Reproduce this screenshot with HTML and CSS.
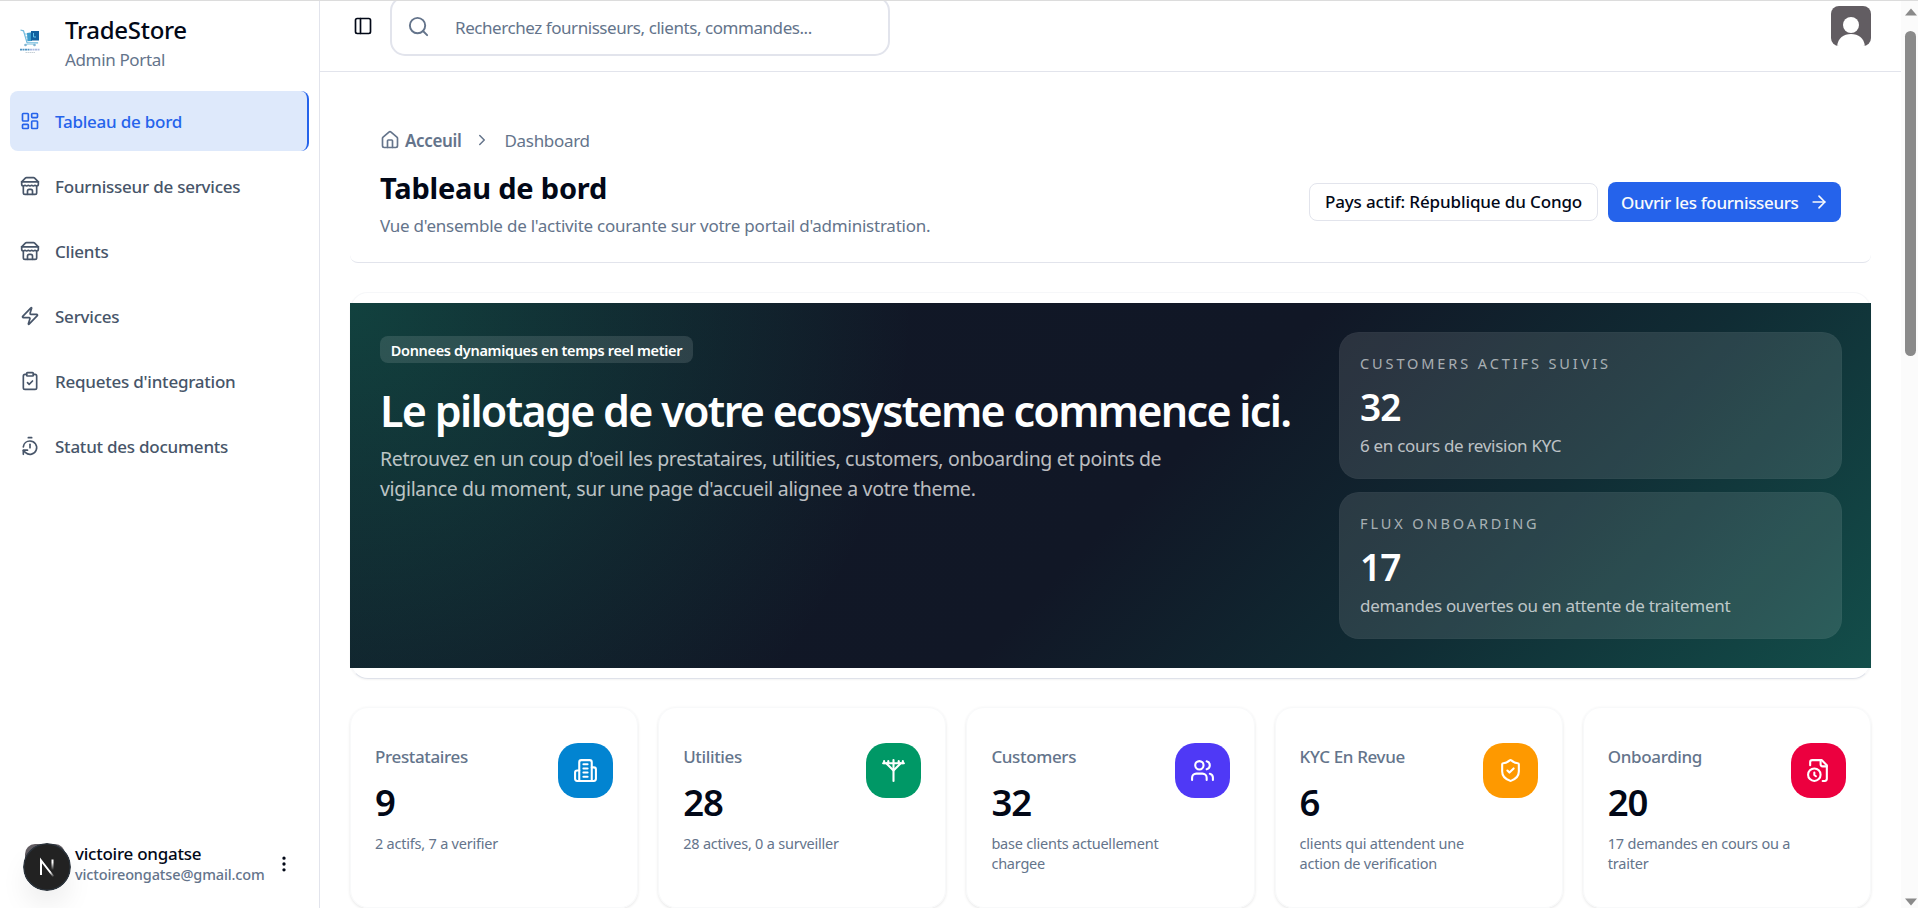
FILE: index.html
```
<!DOCTYPE html>
<html lang="fr">
<head>
    <meta charset="UTF-8">
    <meta name="viewport" content="width=device-width, initial-scale=1.0">
    <title>TradeStore - Tableau de bord</title>
    <link rel="stylesheet" href="styles.css">
</head>
<body>
    <div class="app">
        <!-- Sidebar -->
        <aside class="sidebar">
            <div class="brand">
                <svg class="brand-logo" viewBox="0 0 40 40">
                    <path d="M0.5 9l3 .8 3.600 12h11" fill="none" stroke="#6fb9dc" stroke-width="1.2"/>
                    <path d="M4.500 13h4M5.300 16h4M6 19h4" stroke="#7fc4e2" stroke-width="1"/>
                    <path d="M7 12l5-.8v8.800l-4.500.2z" fill="#3c9bcb"/>
                    <path d="M11 10h8v9.500h-8z" fill="#12609f"/>
                    <path d="M13.500 12v4h2.500" fill="none" stroke="#62c4ea" stroke-width="1"/>
                    <path d="M6 23.500h9" stroke="#b8dcec" stroke-width="1"/>
                    <circle cx="5.500" cy="24" r="1.300" fill="#7fb4d2"/>
                    <circle cx="14.500" cy="24" r="1.300" fill="#7fb4d2"/>
                    <path d="M0 28.700h10" stroke="#4f93c2" stroke-width="1.800" stroke-dasharray="2 .5"/>
                    <path d="M10 28.700h10" stroke="#a9b9e0" stroke-width="1.800" stroke-dasharray="2 .5"/>
                    <path d="M5.500 31.500h10" stroke="#b9c4cc" stroke-width=".8" stroke-dasharray="1.500 .5"/>
                </svg>
                <div>
                    <div class="brand-name">TradeStore</div>
                    <div class="brand-sub">Admin Portal</div>
                </div>
            </div>

            <nav class="menu">
                <a href="#" class="menu-item active">
                    <svg class="icon" viewBox="0 0 24 24"><rect width="7" height="9" x="3" y="3" rx="1"/><rect width="7" height="5" x="14" y="3" rx="1"/><rect width="7" height="9" x="14" y="12" rx="1"/><rect width="7" height="5" x="3" y="16" rx="1"/></svg>
                    <span>Tableau de bord</span>
                </a>
                <a href="#" class="menu-item">
                    <svg class="icon" viewBox="0 0 24 24"><path d="m2 7 4.410-4.410A2 2 0 0 1 7.830 2h8.340a2 2 0 0 1 1.420.590L22 7"/><path d="M4 12v8a2 2 0 0 0 2 2h12a2 2 0 0 0 2-2v-8"/><path d="M15 22v-4a2 2 0 0 0-2-2h-2a2 2 0 0 0-2 2v4"/><path d="M2 7h20"/><path d="M22 7v3a2 2 0 0 1-2 2a2.700 2.700 0 0 1-1.590-.630.700.700 0 0 0-.820 0A2.700 2.700 0 0 1 16 12a2.700 2.700 0 0 1-1.590-.630.700.700 0 0 0-.820 0A2.700 2.700 0 0 1 12 12a2.700 2.700 0 0 1-1.590-.630.700.700 0 0 0-.820 0A2.700 2.700 0 0 1 8 12a2.700 2.700 0 0 1-1.590-.630.700.700 0 0 0-.820 0A2.700 2.700 0 0 1 4 12a2 2 0 0 1-2-2V7"/></svg>
                    <span>Fournisseur de services</span>
                </a>
                <a href="#" class="menu-item">
                    <svg class="icon" viewBox="0 0 24 24"><path d="m2 7 4.410-4.410A2 2 0 0 1 7.830 2h8.340a2 2 0 0 1 1.420.590L22 7"/><path d="M4 12v8a2 2 0 0 0 2 2h12a2 2 0 0 0 2-2v-8"/><path d="M15 22v-4a2 2 0 0 0-2-2h-2a2 2 0 0 0-2 2v4"/><path d="M2 7h20"/><path d="M22 7v3a2 2 0 0 1-2 2a2.700 2.700 0 0 1-1.590-.630.700.700 0 0 0-.820 0A2.700 2.700 0 0 1 16 12a2.700 2.700 0 0 1-1.590-.630.700.700 0 0 0-.820 0A2.700 2.700 0 0 1 12 12a2.700 2.700 0 0 1-1.590-.630.700.700 0 0 0-.820 0A2.700 2.700 0 0 1 8 12a2.700 2.700 0 0 1-1.590-.630.700.700 0 0 0-.820 0A2.700 2.700 0 0 1 4 12a2 2 0 0 1-2-2V7"/></svg>
                    <span>Clients</span>
                </a>
                <a href="#" class="menu-item">
                    <svg class="icon" viewBox="0 0 24 24"><path d="M4 14a1 1 0 0 1-.780-1.630l9.900-10.200a.5.5 0 0 1 .860.460l-1.920 6.020A1 1 0 0 0 13 10h7a1 1 0 0 1 .780 1.630l-9.900 10.200a.5.5 0 0 1-.860-.460l1.920-6.020A1 1 0 0 0 11 14z"/></svg>
                    <span>Services</span>
                </a>
                <a href="#" class="menu-item">
                    <svg class="icon" viewBox="0 0 24 24"><rect width="8" height="4" x="8" y="2" rx="1"/><path d="M16 4h2a2 2 0 0 1 2 2v14a2 2 0 0 1-2 2H6a2 2 0 0 1-2-2V6a2 2 0 0 1 2-2h2"/><path d="m9 14 2 2 4-4"/></svg>
                    <span>Requetes d'integration</span>
                </a>
                <a href="#" class="menu-item">
                    <svg class="icon" viewBox="0 0 24 24"><path d="M10 2h4"/><path d="M12 14v-4"/><path d="M4 13a8 8 0 0 1 8-7 8 8 0 1 1-5.300 14L4 17.600"/><path d="M9 17H4v5"/></svg>
                    <span>Statut des documents</span>
                </a>
            </nav>

            <div class="user">
                <div class="user-avatar">
                    <svg class="dev-badge" viewBox="0 0 48 48">
                        <defs>
                            <linearGradient id="n-fade" x1="0" y1="0" x2="0" y2="1"><stop offset=".3" stop-color="#fff"/><stop offset="1" stop-color="#fff" stop-opacity="0"/></linearGradient>
                            <linearGradient id="n-diag" gradientUnits="userSpaceOnUse" x1="18" y1="17" x2="31" y2="34"><stop offset=".7" stop-color="#fff"/><stop offset="1" stop-color="#fff" stop-opacity="0"/></linearGradient>
                        </defs>
                        <circle cx="24" cy="24" r="23.200" fill="#222" stroke="#2b333b" stroke-width="1.500"/>
                        <path d="M18 32V17.500L30.500 33.500" fill="none" stroke="url(#n-diag)" stroke-width="2"/>
                        <rect x="28.500" y="16.500" width="2" height="10.500" fill="url(#n-fade)"/>
                    </svg>
                </div>
                <div class="user-info">
                    <div class="user-name">victoire ongatse</div>
                    <div class="user-mail">victoireongatse@gmail.com</div>
                </div>
                <svg class="icon dots" viewBox="0 0 24 24"><circle cx="12" cy="12" r="1"/><circle cx="12" cy="5" r="1"/><circle cx="12" cy="19" r="1"/></svg>
            </div>
        </aside>

        <!-- Main content -->
        <main class="main">
            <header class="topbar">
                <svg class="icon toggle" viewBox="0 0 24 24"><rect width="18" height="18" x="3" y="3" rx="2"/><path d="M9 3v18"/></svg>
                <div class="search">
                    <svg class="icon" viewBox="0 0 24 24"><circle cx="11" cy="11" r="8"/><path d="m21 21-4.300-4.300"/></svg>
                    <span>Recherchez fournisseurs, clients, commandes...</span>
                </div>
                <svg class="avatar" viewBox="0 0 40 40">
                    <rect width="40" height="40" fill="#625d62"/>
                    <circle cx="20" cy="19" r="8" fill="#fff"/>
                    <path d="M6 42c0-9 6-14 14-14s14 5 14 14z" fill="#fff"/>
                </svg>
            </header>

            <div class="content">
                <section class="page-head">
                    <div>
                        <div class="breadcrumb">
                            <svg class="icon" viewBox="0 0 24 24"><path d="M15 21v-8a1 1 0 0 0-1-1h-4a1 1 0 0 0-1 1v8"/><path d="M3 10a2 2 0 0 1 .709-1.528l7-5.999a2 2 0 0 1 2.582 0l7 5.999A2 2 0 0 1 21 10v9a2 2 0 0 1-2 2H5a2 2 0 0 1-2-2z"/></svg>
                            <b>Acceuil</b>
                            <svg class="icon chevron" viewBox="0 0 24 24"><path d="m9 18 6-6-6-6"/></svg>
                            <span>Dashboard</span>
                        </div>
                        <h1>Tableau de bord</h1>
                        <p>Vue d'ensemble de l'activite courante sur votre portail d'administration.</p>
                    </div>
                    <div class="actions">
                        <span class="country">Pays actif: République du Congo</span>
                        <a href="#" class="btn"><span>Ouvrir les fournisseurs</span>
                            <svg class="icon" viewBox="0 0 24 24"><path d="M5 12h14"/><path d="m12 5 7 7-7 7"/></svg>
                        </a>
                    </div>
                </section>

                <section class="hero-card">
                    <div class="hero">
                        <div class="hero-text">
                            <span class="badge">Donnees dynamiques en temps reel metier</span>
                            <h2>Le pilotage de votre ecosysteme commence ici.</h2>
                            <p>Retrouvez en un coup d'oeil les prestataires, utilities, customers, onboarding et points de<br>vigilance du moment, sur une page d'accueil alignee a votre theme.</p>
                        </div>
                        <div class="hero-stats">
                            <div class="stat">
                                <div class="stat-label">CUSTOMERS ACTIFS SUIVIS</div>
                                <div class="stat-value">32</div>
                                <div class="stat-note">6 en cours de revision KYC</div>
                            </div>
                            <div class="stat">
                                <div class="stat-label">FLUX ONBOARDING</div>
                                <div class="stat-value">17</div>
                                <div class="stat-note">demandes ouvertes ou en attente de traitement</div>
                            </div>
                        </div>
                    </div>
                </section>

                <!-- KPI cards -->
                <section class="kpis">
                    <div class="kpi">
                        <div>
                            <h3>Prestataires</h3>
                            <strong>9</strong>
                            <p>2 actifs, 7 a verifier</p>
                        </div>
                        <span class="kpi-icon blue"><svg class="icon" viewBox="0 0 24 24"><path d="M6 22V4a2 2 0 0 1 2-2h8a2 2 0 0 1 2 2v18Z"/><path d="M6 12H4a2 2 0 0 0-2 2v6a2 2 0 0 0 2 2h2"/><path d="M18 9h2a2 2 0 0 1 2 2v9a2 2 0 0 1-2 2h-2"/><path d="M10 6h4"/><path d="M10 10h4"/><path d="M10 14h4"/><path d="M10 18h4"/></svg></span>
                    </div>
                    <div class="kpi">
                        <div>
                            <h3>Utilities</h3>
                            <strong>28</strong>
                            <p>28 actives, 0 a surveiller</p>
                        </div>
                        <span class="kpi-icon green"><svg class="icon" viewBox="0 0 24 24"><path d="M12 2v20"/><path d="M2 5h20"/><path d="M3 3v2"/><path d="M7 3v2"/><path d="M17 3v2"/><path d="M21 3v2"/><path d="m19 5-7 7-7-7"/></svg></span>
                    </div>
                    <div class="kpi">
                        <div>
                            <h3>Customers</h3>
                            <strong>32</strong>
                            <p>base clients actuellement<br>chargee</p>
                        </div>
                        <span class="kpi-icon indigo"><svg class="icon" viewBox="0 0 24 24"><path d="M16 21v-2a4 4 0 0 0-4-4H6a4 4 0 0 0-4 4v2"/><circle cx="9" cy="7" r="4"/><path d="M22 21v-2a4 4 0 0 0-3-3.870"/><path d="M16 3.130a4 4 0 0 1 0 7.750"/></svg></span>
                    </div>
                    <div class="kpi">
                        <div>
                            <h3>KYC En Revue</h3>
                            <strong>6</strong>
                            <p>clients qui attendent une<br>action de verification</p>
                        </div>
                        <span class="kpi-icon orange"><svg class="icon" viewBox="0 0 24 24"><path d="M20 13c0 5-3.500 7.500-7.660 8.950a1 1 0 0 1-.670-.010C7.500 20.500 4 18 4 13V6a1 1 0 0 1 1-1c2 0 4.500-1.200 6.240-2.720a1.170 1.170 0 0 1 1.520 0C14.510 3.810 17 5 19 5a1 1 0 0 1 1 1z"/><path d="m9 12 2 2 4-4"/></svg></span>
                    </div>
                    <div class="kpi">
                        <div>
                            <h3>Onboarding</h3>
                            <strong>20</strong>
                            <p>17 demandes en cours ou a<br>traiter</p>
                        </div>
                        <span class="kpi-icon red"><svg class="icon" viewBox="0 0 24 24"><path d="M16 22h2a2 2 0 0 0 2-2V7l-5-5H6a2 2 0 0 0-2 2v3"/><path d="M14 2v4a2 2 0 0 0 2 2h4"/><circle cx="8" cy="16" r="6"/><path d="M9.500 17.500 8 16.250V14"/></svg></span>
                    </div>
                </section>
            </div>
        </main>

        <div class="scrollbar">
            <svg viewBox="0 0 14 9"><path d="M7 1 13 8H1z"/></svg>
            <div class="thumb"></div>
            <svg class="down" viewBox="0 0 14 9"><path d="M1 1h12L7 8z"/></svg>
        </div>
    </div>
</body>
</html>
```
FILE: styles.css
```
/* General Styles */
* {
    box-sizing: border-box;
}

body {
    margin: 0;
    overflow: hidden;
    font-family: "Noto Sans", "Open Sans", sans-serif;
    font-size: 17px;
    letter-spacing: -0.3px;
    color: #020817;
    background: #fff;
}

h1, h2, h3, p {
    margin: 0;
}

a {
    text-decoration: none;
    color: inherit;
}

.icon {
    width: 20px;
    height: 20px;
    flex-shrink: 0;
    fill: none;
    stroke: currentColor;
    stroke-width: 2;
    stroke-linecap: round;
    stroke-linejoin: round;
}

.app {
    display: grid;
    grid-template-columns: 320px 1fr 17px;
    height: 908px;
    border-top: 1px solid #dcdcdc;
}

/* Sidebar */
.sidebar {
    display: flex;
    flex-direction: column;
    border-right: 1px solid #e2e4ec;
}

.brand {
    display: flex;
    gap: 15px;
    height: 90px;
    padding: 11px 10px 0 20px;
}

.brand-logo {
    width: 40px;
    height: 40px;
    margin-top: 9px;
    margin-right: -10px;
}

.brand-name {
    font-size: 24px;
    font-weight: 500;
    line-height: 35px;
}

.brand-sub {
    line-height: 25px;
    letter-spacing: -0.35px;
    color: #64748b;
}

.menu {
    display: flex;
    flex-direction: column;
    gap: 5px;
    padding: 0 10px;
}

.menu-item {
    display: flex;
    align-items: center;
    gap: 15px;
    height: 60px;
    padding: 0 10px;
    border-radius: 8px;
    font-weight: 500;
    letter-spacing: -0.24px;
    color: #475569;
}

.menu-item .icon {
    margin-top: -1px;
}

.menu-item span {
    margin-top: 1px;
}

.menu-item.active {
    background: #dee9fb;
    border-right: 2px solid #2563eb;
    color: #2563eb;
}

.user {
    display: flex;
    align-items: center;
    margin-top: auto;
    padding: 0 0 24px 25px;
}

.user-avatar {
    position: relative;
    width: 40px;
    height: 40px;
    border-radius: 10px;
    background: #625d62;
}

/* floating badge over the avatar */
.dev-badge {
    position: absolute;
    left: -2px;
    top: -1px;
    width: 48px;
    height: 48px;
    border-radius: 50%;
    box-shadow: 0 16px 32px -8px rgba(0, 0, 0, 0.14);
}

.user-info {
    width: 199px;
    margin-left: 10px;
}

.user-name {
    font-weight: 500;
    line-height: 22px;
    letter-spacing: -0.25px;
}

.user-mail {
    font-size: 14.5px;
    font-weight: 500;
    line-height: 19px;
    letter-spacing: -0.13px;
    color: #64748b;
}

/* Topbar */
.main {
    min-width: 0;
    overflow: hidden;
}

.topbar {
    display: flex;
    height: 71px;
    padding: 0 30px 0 33px;
    border-bottom: 1px solid #e2e4ec;
}

.toggle {
    margin-top: 15px;
    margin-right: 17px;
}

.search {
    display: flex;
    align-items: center;
    gap: 25px;
    width: 500px;
    height: 60px;
    margin-top: -5px;
    padding: 3px 15px 0;
    border: 2px solid #e2e4ec;
    border-radius: 15px;
    letter-spacing: -0.44px;
    color: #64748b;
}

.search .icon {
    width: 23px;
    height: 23px;
    margin-top: -2px;
}

.avatar {
    width: 40px;
    height: 40px;
    margin: 5px 0 0 auto;
    border-radius: 8px;
}

/* Page header */
.content {
    padding: 0 30px;
}

.page-head {
    display: flex;
    justify-content: space-between;
    height: 191px;
    padding: 54px 30px 0;
    border-bottom: 1px solid #e2e4ec;
    border-radius: 8px;
}

.breadcrumb {
    display: flex;
    align-items: center;
    height: 28px;
    color: #64748b;
}

.breadcrumb b {
    margin: 0 12px 0 5px;
    font-weight: 600;
    letter-spacing: -0.35px;
}

.breadcrumb span {
    margin: 0 0 0 13px;
}

.chevron {
    width: 18px;
    height: 18px;
}

.page-head h1 {
    margin-top: 14px;
    font-size: 29px;
    line-height: 40px;
    letter-spacing: -0.2px;
}

.page-head p {
    margin-top: 5px;
    line-height: 25px;
    letter-spacing: -0.23px;
    color: #64748b;
}

.actions {
    display: flex;
    align-items: center;
    gap: 10px;
    height: 40px;
    margin-top: 56px;
    font-weight: 500;
}

.country {
    width: 289px;
    height: 38px;
    border: 1px solid #e2e4ec;
    border-radius: 8px;
    line-height: 36px;
    text-align: center;
    letter-spacing: -0.13px;
}

.btn {
    display: flex;
    align-items: center;
    justify-content: space-between;
    width: 233px;
    height: 40px;
    padding: 0 12px 0 13px;
    border-radius: 8px;
    background: #2563eb;
    letter-spacing: -0.34px;
    color: #f8fafc;
}

/* Hero */
.hero-card {
    margin-top: 29px;
    padding: 10px 0;
    border: 1px solid #f6f7f9;
    border-bottom-color: #dfe2ea;
    border-radius: 18px;
    box-shadow: 0 1px 2px rgba(0, 0, 0, 0.05);
}

.hero {
    display: flex;
    justify-content: space-between;
    height: 365px;
    margin: 0 -1px;
    padding: 29px 29px 29px 30px;
    background:
        radial-gradient(circle at top left, rgba(20, 184, 130, 0.26), transparent 36%),
        linear-gradient(135deg, #111827 0%, #111726 52%, #102c34 74%, #134e4a 100%);
    color: #fff;
}

.hero-text {
    padding-top: 4px;
}

.badge {
    display: block;
    width: 313px;
    height: 27px;
    border-radius: 8px;
    background: rgba(255, 255, 255, 0.12);
    font-size: 14.5px;
    font-weight: 600;
    line-height: 28px;
    text-align: center;
    letter-spacing: -0.33px;
}

.hero h2 {
    margin-top: 20px;
    font-size: 43px;
    font-weight: 600;
    line-height: 56px;
    letter-spacing: -1.7px;
    white-space: nowrap;
}

.hero-text p {
    margin-top: 5px;
    font-size: 19.5px;
    line-height: 30px;
    letter-spacing: -0.33px;
    color: rgba(255, 255, 255, 0.72);
}

.hero-stats {
    display: flex;
    flex-direction: column;
    gap: 13px;
    width: 503px;
}

.stat {
    height: 147px;
    padding: 19px 20px;
    border: 1px solid rgba(255, 255, 255, 0.02);
    border-radius: 20px;
    background: rgba(255, 255, 255, 0.11);
}

.stat-label {
    font-size: 14.5px;
    line-height: 22px;
    letter-spacing: 2.9px;
    color: rgba(255, 255, 255, 0.6);
}

.stat-value {
    margin-top: 11px;
    font-size: 37px;
    font-weight: 600;
    line-height: 44px;
    letter-spacing: -1px;
}

.stat-note {
    margin-top: 4px;
    line-height: 25px;
    color: rgba(255, 255, 255, 0.7);
}

/* KPI Cards */
.kpis {
    display: grid;
    grid-template-columns: repeat(5, 1fr);
    gap: 20px;
    margin-top: 28px;
}

.kpi {
    display: flex;
    justify-content: space-between;
    height: 201px;
    padding: 35px 24px 0;
    border: 1px solid #f8f9fa;
    border-radius: 18px;
    box-shadow: 0 1px 3px rgba(0, 0, 0, 0.1);
}

.kpi > div {
    width: 0;
    white-space: nowrap;
}

.kpi h3 {
    font-size: 17px;
    font-weight: 500;
    line-height: 28px;
    letter-spacing: -0.36px;
    color: #64748b;
}

.kpi strong {
    display: block;
    margin-top: 7px;
    font-size: 36.5px;
    font-weight: 600;
    line-height: 48px;
    letter-spacing: -1.1px;
}

.kpi p {
    margin-top: 7px;
    font-size: 14.5px;
    line-height: 20px;
    letter-spacing: -0.22px;
    color: #64748b;
}

.kpi-icon {
    display: flex;
    align-items: center;
    justify-content: center;
    width: 55px;
    height: 55px;
    border-radius: 20px;
    color: #fff;
}

.kpi-icon .icon {
    width: 25px;
    height: 25px;
}

.blue { background: #0284d1; }
.green { background: #009866; }
.indigo { background: #4f39f6; }
.orange { background: #fe9900; }
.red { background: #ec003f; }

/* Scrollbar */
.scrollbar {
    display: flex;
    flex-direction: column;
    align-items: center;
    padding: 6px 0 1px 2px;
    background: #fbfbfb;
}

.scrollbar svg {
    width: 14px;
    height: 10px;
    fill: #8a8a8a;
}

.thumb {
    width: 11px;
    height: 325px;
    margin-top: 14px;
    border-radius: 6px;
    background: #8a8a8a;
}

.scrollbar .down {
    margin-top: auto;
}
```
